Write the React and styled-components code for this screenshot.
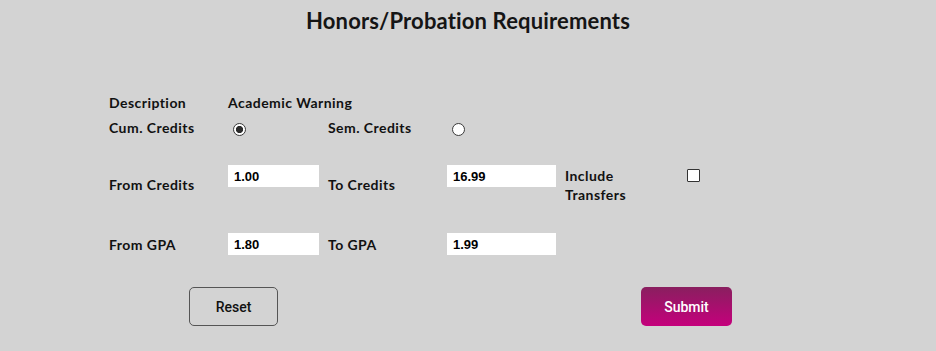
import React, { useState } from "react";
import styled, { createGlobalStyle } from "styled-components";

const GlobalStyle = createGlobalStyle`
  html, body {
    margin: 0;
    padding: 0;
    background: #d3d3d3;
  }
  body {
    font-family: "Lato", "Noto Sans", sans-serif;
    color: #111;
  }
`;

const Page = styled.div`
  width: 936px;
  height: 351px;
  background: #d3d3d3;
  box-sizing: border-box;
  padding-top: 8px;
`;

const Title = styled.h1`
  margin: 0;
  text-align: center;
  font-size: 22px;
  font-weight: 700;
  letter-spacing: 0.15px;
  line-height: 26px;
  color: #151515;
`;

const Form = styled.div`
  display: flex;
  flex-direction: column;
  padding-left: 109px;
  margin-top: 59px;
`;

const Row = styled.div`
  display: grid;
  grid-template-columns: 119px 100px 119px 118px 122px 20px;
  align-items: center;
  margin-top: ${(p) => p.$top || 0}px;
  min-height: ${(p) => p.$height || 18}px;
`;

const Label = styled.span`
  font-size: 14px;
  font-weight: 700;
  letter-spacing: 0.45px;
  line-height: 19px;
  color: #111;
`;

const TextBox = styled.input`
  align-self: start;
  box-sizing: border-box;
  width: ${(p) => p.$width}px;
  height: 22px;
  border: none;
  outline: none;
  background: #fff;
  padding: 0 6px;
  font-family: "Liberation Sans", Arial, sans-serif;
  font-size: 13px;
  font-weight: 700;
  color: #000;
`;

const Radio = styled.input.attrs({ type: "radio" })`
  appearance: none;
  margin: 3px 0 0 5px;
  width: 13px;
  height: 13px;
  box-sizing: border-box;
  border: 1px solid #3a3a3a;
  border-radius: 50%;
  background: #fff;
  &:checked {
    background: radial-gradient(circle, #2b2b2b 0 3.3px, #fff 3.9px);
  }
`;

const Check = styled.input.attrs({ type: "checkbox" })`
  appearance: none;
  align-self: start;
  margin: 4px 0 0 0;
  width: 13px;
  height: 13px;
  box-sizing: border-box;
  border: 1px solid #333;
  border-radius: 1px;
  background: #fff;
`;

const ButtonRow = styled.div`
  display: flex;
  gap: 363px;
  padding-left: 189px;
  margin-top: 32px;
`;

const Button = styled.button`
  box-sizing: border-box;
  width: ${(p) => (p.$primary ? 91 : 89)}px;
  height: 39px;
  border-radius: 5px;
  font-family: "Roboto", "Liberation Sans", sans-serif;
  font-size: 14px;
  font-weight: 500;
  cursor: pointer;
  border: ${(p) => (p.$primary ? "none" : "1px solid #555")};
  color: ${(p) => (p.$primary ? "#fff" : "#111")};
  background: ${(p) =>
    p.$primary ? "linear-gradient(#891f5f, #c5007c)" : "transparent"};
`;

export default function App() {
  const [mode, setMode] = useState("cum");
  return (
    <>
      <GlobalStyle />
      <Page>
        <Title>Honors/Probation Requirements</Title>
        <Form>
          <Row>
            <Label>Description</Label>
            <Label style={{ gridColumn: "2 / span 3" }}>Academic Warning</Label>
          </Row>
          <Row $top={6}>
            <Label>Cum. Credits</Label>
            <Radio name="mode" checked={mode === "cum"} onChange={() => setMode("cum")} />
            <Label>Sem. Credits</Label>
            <Radio name="mode" checked={mode === "sem"} onChange={() => setMode("sem")} />
          </Row>
          <Row $top={28} $height={39}>
            <Label>From Credits</Label>
            <TextBox $width={91} defaultValue="1.00" />
            <Label>To Credits</Label>
            <TextBox $width={109} defaultValue="16.99" />
            <Label>
              Include
              <br />
              Transfers
            </Label>
            <Check />
          </Row>
          <Row $top={29} $height={22}>
            <Label>From GPA</Label>
            <TextBox $width={91} defaultValue="1.80" />
            <Label>To GPA</Label>
            <TextBox $width={109} defaultValue="1.99" />
          </Row>
        </Form>
        <ButtonRow>
          <Button>Reset</Button>
          <Button $primary>Submit</Button>
        </ButtonRow>
      </Page>
    </>
  );
}
